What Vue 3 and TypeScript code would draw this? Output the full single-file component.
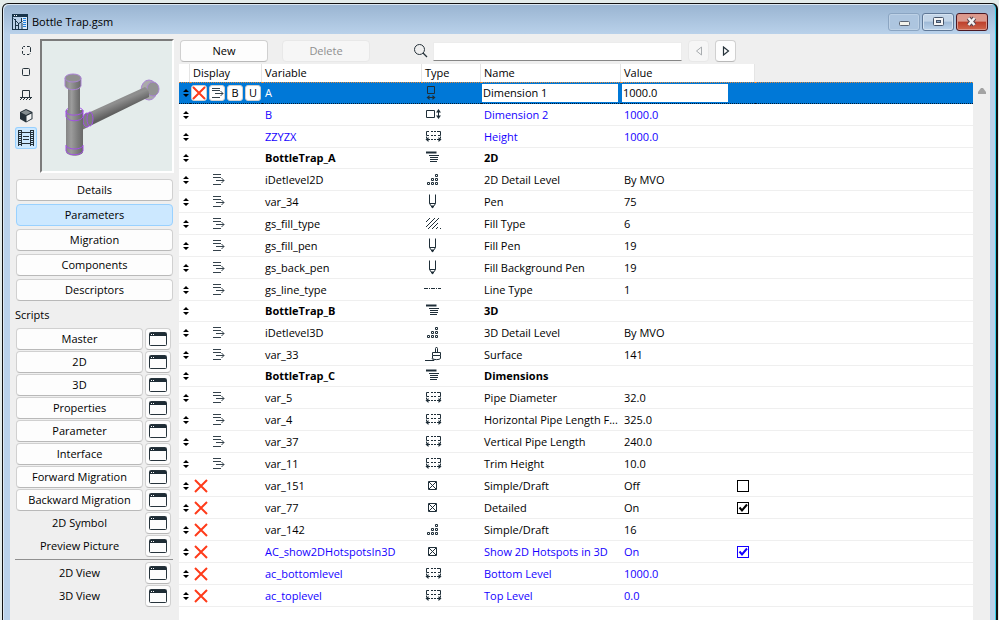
<script setup lang="ts">
import { ref } from 'vue'

type Kind = 'width' | 'depth' | 'length' | 'group' | 'levels' | 'pen' | 'fill' | 'line' | 'surface' | 'bool'
type Flag = 'hidden' | 'indent' | ''

interface Param {
  id: string
  kind: Kind
  name: string
  value: string
  flag: Flag
  fixed?: boolean
  checked?: boolean
}

const glyphs: Record<Kind, { line: string; solid: string }> = {
  width: { line: 'M4.5 3.5h7v7h-7zM5 14.5h6', solid: 'M3.5 14.5l3-2.5v5zM12.5 14.5l-3-2.5v5z' },
  depth: { line: 'M3.5 5.5h8v7h-8zM15.5 7v5', solid: 'M15.5 4l-2.5 3.5h5zM15.5 14l-2.5-3.5h5z' },
  length: {
    line: 'M6 4.5H3.5v4H6M8 4.5h2M11 4.5h2M8 8.5h2M11 8.5h2M14 4.5h3.5v4H15M5 12.5h2M8 12.5h2M11 12.5h2M14 12.5h2M3.5 9.5v2M17.5 9.5v2',
    solid: 'M2.5 12.5l3-2.5v5zM18.5 12.5l-3-2.5v5z',
  },
  group: { line: 'M6 7.5h10M7 9.5h8M7 11.5h8M7 13.5h7', solid: 'M3 3.5h10.500v2H3z' },
  levels: {
    line: 'M4.5 12.5h2v2h-2zM8.500 12.5h2v2h-2zM12.5 12.5h2v2h-2zM8.500 8.500h2v2h-2zM12.5 8.500h2v2h-2zM12.5 4.5h2v2h-2z',
    solid: '',
  },
  pen: { line: 'M6.5 2.5v9l3 4.500 3-4.500v-9M6.5 11.5h6', solid: 'M8 13.500h3l-1.500 3z' },
  fill: { line: 'M3 8l4-4M3 13l9-9M5 15L16 4M9 15l6-6M13 15l2-2M17 15l1-1', solid: '' },
  line: { line: 'M1 8.500h4M6 8.500h1M8 8.500h4M13 8.500h1M15 8.500h3', solid: '' },
  surface: { line: 'M9.500 7.500h8v3h-8zM9.500 10.500v3c1 1.500 7 1.500 8 0v-3M12.500 7V3.500l1-1.500 1 1.500V7M2 15.500h9l-2-2', solid: '' },
  bool: { line: 'M5.500 5.500h8v8h-8zM6 6l7 7M13 6l-7 7', solid: '' },
}

const params = ref<Param[]>([
  { id: 'A', kind: 'width', name: 'Dimension 1', value: '1000.0', flag: 'hidden', fixed: true },
  { id: 'B', kind: 'depth', name: 'Dimension 2', value: '1000.0', flag: '', fixed: true },
  { id: 'ZZYZX', kind: 'length', name: 'Height', value: '1000.0', flag: '', fixed: true },
  { id: 'BottleTrap_A', kind: 'group', name: '2D', value: '', flag: '' },
  { id: 'iDetlevel2D', kind: 'levels', name: '2D Detail Level', value: 'By MVO', flag: 'indent' },
  { id: 'var_34', kind: 'pen', name: 'Pen', value: '75', flag: 'indent' },
  { id: 'gs_fill_type', kind: 'fill', name: 'Fill Type', value: '6', flag: 'indent' },
  { id: 'gs_fill_pen', kind: 'pen', name: 'Fill Pen', value: '19', flag: 'indent' },
  { id: 'gs_back_pen', kind: 'pen', name: 'Fill Background Pen', value: '19', flag: 'indent' },
  { id: 'gs_line_type', kind: 'line', name: 'Line Type', value: '1', flag: 'indent' },
  { id: 'BottleTrap_B', kind: 'group', name: '3D', value: '', flag: '' },
  { id: 'iDetlevel3D', kind: 'levels', name: '3D Detail Level', value: 'By MVO', flag: 'indent' },
  { id: 'var_33', kind: 'surface', name: 'Surface', value: '141', flag: 'indent' },
  { id: 'BottleTrap_C', kind: 'group', name: 'Dimensions', value: '', flag: '' },
  { id: 'var_5', kind: 'length', name: 'Pipe Diameter', value: '32.0', flag: 'indent' },
  { id: 'var_4', kind: 'length', name: 'Horizontal Pipe Length F...', value: '325.0', flag: 'indent' },
  { id: 'var_37', kind: 'length', name: 'Vertical Pipe Length', value: '240.0', flag: 'indent' },
  { id: 'var_11', kind: 'length', name: 'Trim Height', value: '10.0', flag: 'indent' },
  { id: 'var_151', kind: 'bool', name: 'Simple/Draft', value: 'Off', flag: 'hidden', checked: false },
  { id: 'var_77', kind: 'bool', name: 'Detailed', value: 'On', flag: 'hidden', checked: true },
  { id: 'var_142', kind: 'levels', name: 'Simple/Draft', value: '16', flag: 'hidden' },
  { id: 'AC_show2DHotspotsIn3D', kind: 'bool', name: 'Show 2D Hotspots in 3D', value: 'On', flag: 'hidden', fixed: true, checked: true },
  { id: 'ac_bottomlevel', kind: 'length', name: 'Bottom Level', value: '1000.0', flag: 'hidden', fixed: true },
  { id: 'ac_toplevel', kind: 'length', name: 'Top Level', value: '0.0', flag: 'hidden', fixed: true },
])

const pages = ['Details', 'Parameters', 'Migration', 'Components', 'Descriptors']
const page = ref('Parameters')
const scripts = ['Master', '2D', '3D', 'Properties', 'Parameter', 'Interface', 'Forward Migration', 'Backward Migration']
const pictures = ['2D Symbol', 'Preview Picture']
const views = ['2D View', '3D View']
const search = ref('')
const selected = 'A'
</script>

<template>
  <div class="desktop">
    <div class="window">
      <header class="titlebar">
        <svg class="app-icon" width="16" height="16" viewBox="0 0 16 16">
          <path d="M0 0h16v16H0z" fill="#18344a" />
          <path d="M1 3h9v12H1z" fill="#b9d1ea" />
          <path d="M10 3h5v12h-5z" fill="#dbeaf8" />
          <path d="M11 4.500h3M11 6.500h3M11 8.500h3M11 10.500h3M11 12.500h3" stroke="#1a7fe0" />
          <path d="M3.500 15V5M1.500 4.500l5 5 4-2M6.500 9v6M9.500 4v4M3 11.500h3M10 9v6" stroke="#18344a" fill="none" />
          <path d="M2 1.500h1M4 1.500h1" stroke="#fff" />
        </svg>
        <h1>Bottle Trap.gsm</h1>
        <div class="controls">
          <button class="control faint" aria-label="Minimize">
            <svg width="16" height="14" viewBox="0 0 16 14"><rect x="3.500" y="6.500" width="10" height="4" rx="1" fill="#f3f3ec" stroke="#5b6472" /></svg>
          </button>
          <button class="control" aria-label="Maximize">
            <svg width="16" height="14" viewBox="0 0 16 14">
              <rect x="3.500" y="2.500" width="10" height="8" rx="1" fill="#f5f5f5" stroke="#465469" />
              <rect x="6.500" y="5.500" width="4" height="2" fill="#8ba8c8" stroke="#465469" />
            </svg>
          </button>
          <button class="control close" aria-label="Close">
            <svg width="16" height="14" viewBox="0 0 16 14">
              <path d="M4.500 3l6 7M10.500 3l-6 7" stroke="#5a4650" stroke-width="4.500" />
              <path d="M4.500 3l6 7M10.500 3l-6 7" stroke="#f4f4f4" stroke-width="2.500" />
            </svg>
          </button>
        </div>
      </header>

      <div class="content">
        <aside class="sidebar">
          <div class="preview-row">
            <div class="modes">
              <button class="mode" aria-label="2D symbol">
                <svg width="20" height="20" viewBox="0 0 20 20"><path d="M9 6.500H7.500l-1 1V9M6.500 11v2.500l1 1H9M11 14.500h2l1-1M14.500 12V7.500l-1-1H11" /></svg>
              </button>
              <button class="mode" aria-label="2D full view">
                <svg width="20" height="20" viewBox="0 0 20 20"><rect x="6.500" y="6.500" width="7" height="7" rx="1" /></svg>
              </button>
              <button class="mode" aria-label="Front view">
                <svg width="20" height="20" viewBox="0 0 20 20"><path d="M6.500 13V6.500h7V13M4 13.500h12M6 14l-2 2M9 14l-2 2M12 14l-2 2M15 14l-2 2" /></svg>
              </button>
              <button class="mode" aria-label="3D view">
                <svg width="20" height="20" viewBox="0 0 20 20">
                  <path d="M10 3l6.500 3v7L10 16.500 4 13V6z" fill="#26323a" stroke="none" />
                  <path d="M10 4l5 2.500-5 2.500-5-2.500z" fill="#858e91" stroke="none" />
                  <path d="M10.500 10L15.500 7.500v5L10.500 15.500z" fill="#f0f2f2" stroke="none" />
                </svg>
              </button>
              <button class="mode active" aria-label="Preview picture">
                <svg width="20" height="20" viewBox="0 0 20 20">
                  <path d="M2.500 2v16M5.500 2v16M14.500 2v16M17.500 2v16M6 4.500h8M6 15.500h8M7 8.500h6M7 11.500h6" />
                  <path d="M4 2v16M16 2v16" stroke-width="2" stroke-dasharray="1 1" />
                </svg>
              </button>
            </div>
            <div class="preview">
              <svg viewBox="0 0 130 130" width="130" height="130" role="img" aria-label="Bottle trap">
                <defs>
                  <linearGradient id="vertical"><stop offset="0" stop-color="#848484" /><stop offset=".3" stop-color="#9c9c9c" /><stop offset=".7" stop-color="#7c7c7c" /><stop offset="1" stop-color="#686868" /></linearGradient>
                  <linearGradient id="slanted" gradientUnits="userSpaceOnUse" x1="75" y1="57" x2="80" y2="69"><stop offset="0" stop-color="#8c8c8c" /><stop offset=".3" stop-color="#8f8f8f" /><stop offset="1" stop-color="#5f5f5f" /></linearGradient>
                </defs>
                <ellipse cx="107" cy="49" rx="8" ry="10" fill="#aaa" stroke="#a983d3" />
                <ellipse cx="111" cy="48" rx="6" ry="7" fill="#939393" stroke="#a983d3" />
                <path d="M46 72L103 46q5 3 4 10L50 84z" fill="url(#slanted)" />
                <path d="M38 77l8-3v12l-8 4z" fill="#777" />
                <ellipse cx="45" cy="79" rx="4" ry="7" fill="#7f7f7f" stroke="#a24fe7" />
                <ellipse cx="48" cy="78" rx="3" ry="7" fill="#7c7c7c" stroke="#a24fe7" />
                <path d="M26 43h12v30H26z" fill="url(#vertical)" />
                <path d="M23 37v8c2 5 14 5 16 0v-8z" fill="url(#vertical)" stroke="#aa83d4" />
                <ellipse cx="31" cy="37" rx="8" ry="4" fill="#909090" stroke="#aa83d4" />
                <path d="M24 69v42c2 5 15 5 17 0V69z" fill="url(#vertical)" />
                <path d="M24 70c0-5 17-5 17 0s-17 6-17 0v6c3 5 14 5 17 0v-7M24 104v6c2 5 15 5 17 0v-6M24 105c3 4 14 4 17 0" fill="none" stroke="#a24fe7" />
                <path d="M26 65h12v7q-6 2-12 0z" fill="url(#vertical)" />
              </svg>
            </div>
          </div>

          <nav class="pages">
            <button v-for="p in pages" :key="p" class="btn" :class="{ active: page === p }" @click="page = p">{{ p }}</button>
          </nav>

          <h2>Scripts</h2>
          <div class="scripts">
            <template v-for="s in scripts" :key="s">
              <button class="btn">{{ s }}</button>
              <button class="btn" :aria-label="`Open ${s}`">
                <svg width="18" height="14" viewBox="0 0 18 14"><path d="M1 1h16v3H1z" fill="#1e2c35" /><rect x=".5" y=".5" width="17" height="13" rx="1" fill="none" stroke="#26333b" /><path d="M2 2.500h1M4 2.500h1" stroke="#fff" /></svg>
              </button>
            </template>
            <template v-for="s in pictures" :key="s">
              <span class="caption">{{ s }}</span>
              <button class="btn" :aria-label="`Open ${s}`">
                <svg width="18" height="14" viewBox="0 0 18 14"><path d="M1 1h16v3H1z" fill="#1e2c35" /><rect x=".5" y=".5" width="17" height="13" rx="1" fill="none" stroke="#26333b" /><path d="M2 2.500h1M4 2.500h1" stroke="#fff" /></svg>
              </button>
            </template>
          </div>
          <hr />
          <div class="scripts">
            <template v-for="s in views" :key="s">
              <span class="caption">{{ s }}</span>
              <button class="btn" :aria-label="`Open ${s}`">
                <svg width="18" height="14" viewBox="0 0 18 14"><path d="M1 1h16v3H1z" fill="#1e2c35" /><rect x=".5" y=".5" width="17" height="13" rx="1" fill="none" stroke="#26333b" /><path d="M2 2.500h1M4 2.500h1" stroke="#fff" /></svg>
              </button>
            </template>
          </div>
        </aside>

        <main class="main">
          <div class="toolbar">
            <button class="btn wide">New</button>
            <button class="btn wide" disabled>Delete</button>
            <label class="search">
              <svg width="16" height="16" viewBox="0 0 16 16"><circle cx="7.500" cy="6.500" r="5" fill="none" stroke="#26323a" /><path d="M11 10l4 4" stroke="#26323a" stroke-width="1.300" /></svg>
              <input v-model="search" type="text" aria-label="Search parameters" />
            </label>
            <button class="btn nav" disabled aria-label="Previous">
              <svg width="10" height="10" viewBox="0 0 10 10"><path d="M7.500 1v8L2.500 5z" fill="none" stroke="#a8acaf" /></svg>
            </button>
            <button class="btn nav" aria-label="Next">
              <svg width="10" height="10" viewBox="0 0 10 10"><path d="M2.500 1v8l5-4z" fill="none" stroke="#26323a" stroke-width="1.200" /></svg>
            </button>
          </div>

          <div class="list">
            <table>
              <colgroup>
                <col class="c-grip" /><col class="c-display" /><col class="c-variable" /><col class="c-type" /><col class="c-name" /><col class="c-value" /><col />
              </colgroup>
              <thead>
                <tr>
                  <th></th><th>Display</th><th>Variable</th><th>Type</th><th>Name</th><th>Value</th><td></td>
                </tr>
              </thead>
              <tbody>
                <tr v-for="p in params" :key="p.id" :class="{ selected: p.id === selected, fixed: p.fixed, group: p.kind === 'group' }">
                  <td class="grip">
                    <svg width="6" height="8" viewBox="0 0 6 8"><path d="M3 0l3 3H0zM3 8L0 5h6z" /></svg>
                  </td>
                  <td>
                    <div class="flags">
                      <template v-if="p.id === selected">
                        <button class="flag" aria-label="Hide"><svg width="14" height="14" viewBox="0 0 14 14"><path class="cross" d="M1 1l12 12M13 1L1 13" /></svg></button>
                        <button class="flag" aria-label="Indent"><svg width="14" height="14" viewBox="0 0 14 14"><path class="indent" d="M2 2.500h8M2 4.500h8M5 7.500h8M10.500 5l2.500 2.500-2.500 2.500M2 11.500h8" /></svg></button>
                        <button class="flag">B</button>
                        <button class="flag">U</button>
                      </template>
                      <svg v-else-if="p.flag === 'hidden'" class="flag-hidden" width="14" height="14" viewBox="0 0 14 14"><path class="cross" d="M1 1l12 12M13 1L1 13" /></svg>
                      <svg v-else-if="p.flag === 'indent'" class="flag-indent" width="14" height="14" viewBox="0 0 14 14"><path class="indent" d="M2 1.500h8M2 4.500h8M5 7.500h8M10.500 5l2.500 2.500-2.500 2.500M2 11.500h8" /></svg>
                    </div>
                  </td>
                  <td class="text">{{ p.id }}</td>
                  <td>
                    <svg class="kind" width="20" height="20" viewBox="0 0 20 20">
                      <path :d="glyphs[p.kind].line" fill="none" stroke="#1f2e38" />
                      <path :d="glyphs[p.kind].solid" fill="#1f2e38" />
                    </svg>
                  </td>
                  <td :class="{ text: p.id !== selected }">
                    <input v-if="p.id === selected" v-model="p.name" class="edit" type="text" aria-label="Name" />
                    <template v-else>{{ p.name }}</template>
                  </td>
                  <td :class="{ text: p.id !== selected }">
                    <input v-if="p.id === selected" v-model="p.value" class="edit short" type="text" aria-label="Value" />
                    <label v-else-if="p.checked !== undefined" class="toggle">
                      <span>{{ p.value }}</span>
                      <span class="box">
                        <input v-model="p.checked" type="checkbox" />
                        <svg v-if="p.checked" width="12" height="12" viewBox="0 0 12 12"><path d="M2.500 5.500l2.500 3 5-6" fill="none" stroke="currentColor" stroke-width="2" /></svg>
                      </span>
                    </label>
                    <template v-else>{{ p.value }}</template>
                  </td>
                  <td></td>
                </tr>
              </tbody>
            </table>
            <div class="scrollbar">
              <svg width="8" height="6" viewBox="0 0 8 6"><path d="M3 0h2l3 4v2H0V4z" fill="#a3a3a3" /></svg>
            </div>
          </div>
        </main>
      </div>
    </div>
  </div>
</template>

<style>
body {
  margin: 0;
  overflow: hidden;
}
</style>

<style scoped>
.desktop {
  box-sizing: border-box;
  height: 100vh;
  padding: 3px 1px 0 2px;
  overflow: hidden;
  background: #e4eceb;
  color: #000;
  font: 11px/16px "Open Sans", "Noto Sans", sans-serif;
}
.desktop * { box-sizing: border-box; }
.window {
  display: flex;
  flex-direction: column;
  height: 100%;
  padding: 0 6px 0 7px;
  border: 1px solid #111;
  border-right-width: 2px;
  border-bottom: 0;
  border-radius: 6px 6px 0 0;
  background: linear-gradient(#99b4d1, #b9d1ea 30px);
  box-shadow: inset -1px 0 #35d0ea, inset 1px 1px #dce8f3;
}
.titlebar {
  display: flex;
  align-items: center;
  height: 30px;
  padding: 6px 2px 0 2px;
  flex: none;
}
.titlebar h1 {
  flex: 1;
  margin: 0 0 0 4px;
  font-size: 11px;
  font-weight: 400;
}
.controls {
  display: flex;
  gap: 2px;
}
.control {
  display: grid;
  place-items: center;
  width: 32px;
  height: 18px;
  padding: 0;
  border: 1px solid #5f7897;
  border-radius: 3px;
  background: linear-gradient(#c3d5e8 45%, #9eb9d6 50%, #bcd3ea);
  box-shadow: inset 0 0 0 1px #d5e3f1;
}
.control.faint {
  border-color: #8ba5c2;
  background: #adc5df;
  box-shadow: inset 0 0 0 1px #bdd1e6;
}
.control.close {
  border-color: #4c1822;
  background: linear-gradient(#dc9a8e 45%, #bd3f2c 50%, #d0684d);
  box-shadow: inset 0 0 0 1px #dc968a;
}
.content {
  display: flex;
  flex: 1;
  min-height: 0;
  background: #efefef;
}
.sidebar {
  width: 169px;
  flex: none;
  padding: 5px 6px 0 5px;
}
.preview-row { display: flex; gap: 3px; }
.modes { display: flex; flex-direction: column; width: 22px; }
.mode {
  display: grid;
  place-items: center;
  width: 22px;
  height: 22px;
  padding: 0;
  border: 0;
  border-radius: 3px;
  background: none;
}
.mode svg { fill: none; stroke: #26323a; }
.mode.active { background: #cce8ff; box-shadow: inset 0 0 0 1px #99d1ff; }
.preview {
  width: 134px;
  height: 134px;
  border: 2px solid;
  border-color: #7b7b7b #fff #fff #7b7b7b;
  background: #e4eceb;
}
.preview svg { display: block; }
.btn {
  display: grid;
  place-items: center;
  height: 22px;
  padding: 0;
  border: 1px solid #d0d0d0;
  border-bottom-color: #b9b9b9;
  border-radius: 4px;
  background: #fdfdfd;
  color: #000;
  font: inherit;
}
.btn:disabled {
  border-color: #e8e8e8;
  background: #f6f6f6;
  color: #8f8f8f;
}
.btn.active { border-color: #99d1ff; background: #cce8ff; }
.pages {
  display: grid;
  gap: 3px;
  margin-top: 6px;
  padding-left: 1px;
}
.sidebar h2 {
  margin: 6px 0 5px;
  font-size: 11px;
  font-weight: 400;
}
.scripts {
  display: grid;
  grid-template-columns: 1fr 26px;
  gap: 1px 2px;
  padding: 0 2px 0 1px;
}
.caption { text-align: center; line-height: 22px; }
.sidebar hr {
  height: 1px;
  margin: 2px 0;
  border: 0;
  background: #909090;
}
.main {
  display: flex;
  flex: 1;
  flex-direction: column;
  min-width: 0;
}
.toolbar {
  display: flex;
  align-items: center;
  padding: 6px 0 2px 1px;
}
.btn.wide { width: 88px; margin-right: 14px; }
.btn.nav { width: 21px; margin-left: 6px; }
.search {
  display: flex;
  align-items: center;
  gap: 5px;
  margin-left: 28px;
}
.search input {
  width: 249px;
  height: 19px;
  padding: 0 4px;
  border: 1px solid #ececec;
  border-bottom-color: #868686;
  background: #fff;
  font: inherit;
}
.list {
  display: flex;
  flex: 1;
  min-height: 0;
  background: #fff;
}
table {
  flex: 1;
  width: 0;
  align-self: flex-start;
  border-collapse: separate;
  border-spacing: 0;
  table-layout: fixed;
}
.c-grip { width: 11px; }
.c-display { width: 72px; }
.c-variable { width: 160px; }
.c-type { width: 59px; }
.c-name { width: 140px; }
.c-value { width: 134px; }
th {
  height: 18px;
  padding: 0 0 0 3px;
  border-right: 1px solid #e5e5e5;
  background: #fff;
  font-weight: 400;
  text-align: left;
}
thead td { background: #efefef; }
td { padding: 0; }
tbody td {
  height: 22px;
  border-bottom: 1px solid #efefef;
  line-height: 20px;
  white-space: nowrap;
}
.text { padding-left: 3px; }
.fixed .text { color: #1400ff; }
.group td { height: 21px; font-weight: 700; }
.selected td {
  border-top: 1px dotted #e08a3c;
  border-bottom: 1px dotted #001a33;
  background: #0078d7;
}
.selected .text { color: #fff; }
.grip { padding-left: 4px; }
.grip svg { display: block; }
.flags { display: flex; gap: 2px; }
.flag {
  display: grid;
  place-items: center;
  width: 16px;
  height: 16px;
  padding: 0;
  border: 1px solid #d0d0d0;
  border-radius: 3px;
  background: #fff;
  font: inherit;
  line-height: 14px;
}
.selected .flags { padding-left: 1px; }
.flag-hidden { margin-left: 4px; }
.flag-indent { margin-left: 21px; }
.cross { fill: none; stroke: #ff3b1a; stroke-width: 2; }
.indent { fill: none; stroke: #35424b; }
.kind { display: block; margin-left: 1px; }
.edit {
  display: block;
  width: 136px;
  height: 18px;
  margin-left: 1px;
  padding: 0 1px;
  border: 0;
  background: #fff;
  font: inherit;
}
.edit.short { width: 106px; }
.toggle { display: flex; align-items: center; }
.toggle > span:first-child { width: 113px; }
.box { display: grid; place-items: center; }
.box input {
  grid-area: 1 / 1;
  width: 12px;
  height: 12px;
  margin: 0;
  border: 1px solid currentColor;
  background: #fff;
  color: inherit;
  appearance: none;
}
.box svg { grid-area: 1 / 1; pointer-events: none; }
.scrollbar {
  width: 17px;
  flex: none;
  padding: 24px 0 0 5px;
  background: #efefef;
}
.scrollbar svg { display: block; }
</style>
